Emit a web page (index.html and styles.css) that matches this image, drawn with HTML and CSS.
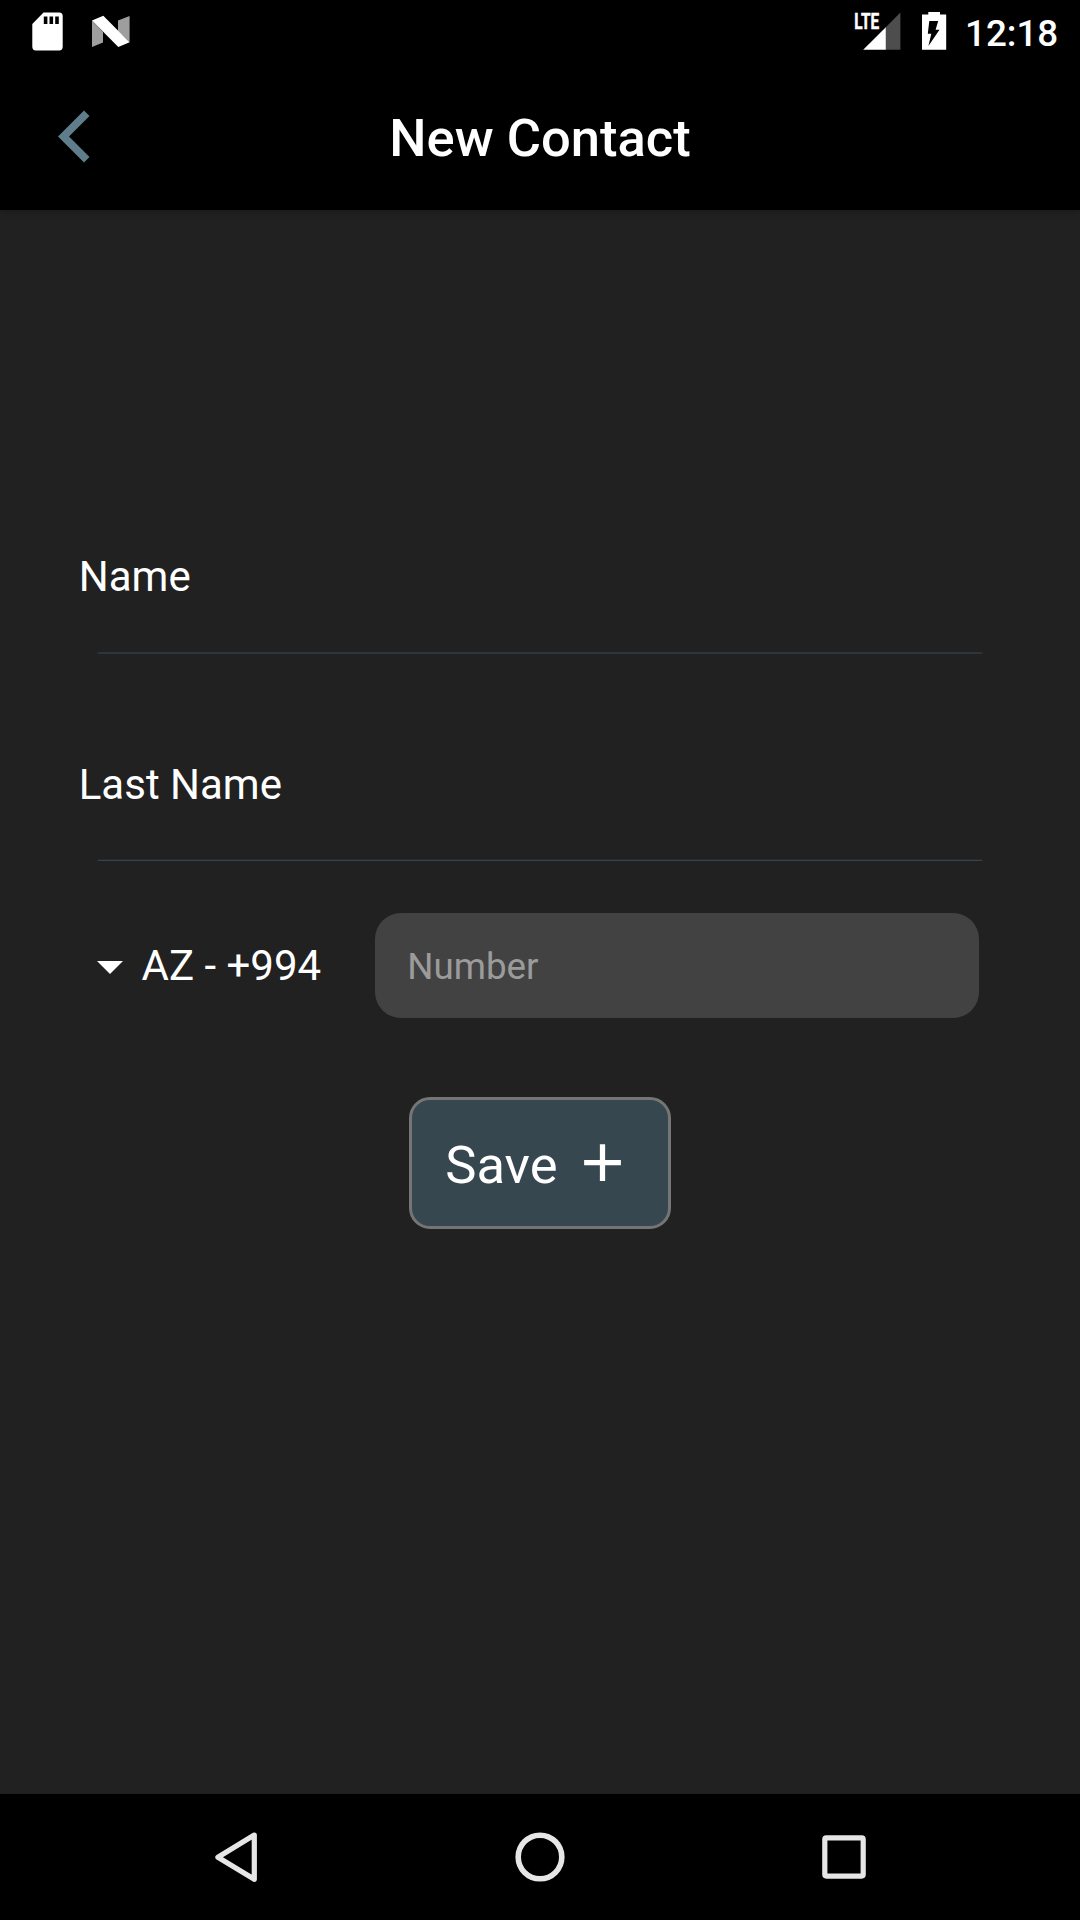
FILE: index.html
```html
<!DOCTYPE html>
<html lang="en">
<head>
<meta charset="utf-8">
<title>New Contact</title>
<link rel="stylesheet" href="styles.css">
</head>
<body>
<div class="screen">
  <div class="statusbar">
    <svg class="notifications" width="140" height="63" viewBox="0 0 140 63">
      <path fill="#fff" fill-rule="evenodd" d="M43.500 12.600H59.200Q62.700 12.600 62.700 16.200V46.800Q62.700 50.400 59.200 50.400H35.800Q32.300 50.400 32.300 46.800V24ZM43.800 16.500V24H47.400V16.500ZM49.500 16.500V24H53.100V16.500ZM55.200 16.500V24H58.800V16.500Z"/>
      <path fill="#9e9e9e" d="M92 20.500L103 32V42.500L92 47ZM118 20.500L129.600 16V42L118 31Z"/>
      <path fill="#fff" d="M92 20.500L103.300 15.800L129.600 42.300L118.300 47Z"/>
    </svg>
    <div class="system">
      <svg width="100" height="63" viewBox="850 0 100 63">
        <path fill="#4d4d4d" d="M885.800 27.200L900.400 12.600V49.800H885.800Z"/>
        <path fill="#fff" d="M863.200 49.800L885.800 27.200V49.800Z"/>
        <text class="lte" x="854.300" y="29" textLength="24.800" lengthAdjust="spacingAndGlyphs">LTE</text>
        <path fill="#fff" d="M922 14.600H928.300V12H940V14.600H946.200V49.800H922Z"/>
        <path fill="#000" d="M929.300 21H938.200L935.600 29.700H939.500L928.400 46L931.300 33.800H927.800Z"/>
      </svg>
      <span class="clock">12:18</span>
    </div>
  </div>
  <header class="appbar">
    <svg class="back" width="36" height="56" viewBox="56 108 36 56">
      <path fill="#607d8b" d="M84 110.400L89.500 115.900L69 136.500L89.500 157.100L84 162.600L58 136.500Z"/>
    </svg>
    <h1 class="title">New Contact</h1>
  </header>
  <main class="form">
    <div class="field">
      <label class="label">Name</label>
      <div class="underline"></div>
    </div>
    <div class="field">
      <label class="label">Last Name</label>
      <div class="underline underline-last"></div>
    </div>
    <div class="phone">
      <div class="country">
        <svg class="caret" width="26" height="13" viewBox="0 0 26 13"><path fill="#fff" d="M0 0H26L13 13Z"/></svg>
        <span class="code">AZ - +994</span>
      </div>
      <div class="number">Number</div>
    </div>
    <div class="save">
      <span class="save-text">Save</span>
      <svg width="63" height="63" viewBox="0 0 24 24"><path fill="#fff" d="M19 13h-6v6h-2v-6H5v-2h6V5h2v6h6v2z"/></svg>
    </div>
  </main>
  <nav class="navbar">
    <svg width="1080" height="126" viewBox="0 1794 1080 126" fill="none" stroke="#e6e6e6">
      <path stroke-width="5.200" stroke-linejoin="round" d="M254.300 1835L217.900 1857.300L254.300 1879.300Z"/>
      <circle stroke-width="5.600" cx="540" cy="1857" r="21.800"/>
      <rect stroke-width="5.200" x="824.800" y="1837.900" width="38.400" height="38.200" rx="1.500"/>
    </svg>
  </nav>
</div>
</body>
</html>
```
FILE: styles.css
```css
* { box-sizing: border-box; }

body {
  margin: 0;
  background: #212121;
  color: #fff;
  font-family: Roboto, sans-serif;
}

svg { display: block; flex: none; }

.screen {
  width: 1080px;
  height: 1920px;
  display: flex;
  flex-direction: column;
}

.statusbar {
  height: 63px;
  display: flex;
  justify-content: space-between;
  background: #000;
}

.system { display: flex; width: 230px; }

.lte {
  font-size: 21.5px;
  font-weight: 700;
  fill: #fff;
  stroke: #fff;
  stroke-width: 0.5px;
}

.clock {
  margin: 12px 0 0 15px;
  font-size: 36.75px;
  line-height: 44px;
  font-weight: 500;
  white-space: nowrap;
}

.appbar {
  height: 147px;
  display: grid;
  grid-template-columns: 56px 1fr 56px;
  background: #000;
  box-shadow: 0 2px 6px rgba(0, 0, 0, 0.25);
}

.back { margin: 45px 0 0 56px; }

.title {
  margin: 44px 0 0;
  font-size: 52.5px;
  line-height: 62px;
  font-weight: 500;
  text-align: center;
  white-space: nowrap;
}

.form {
  flex: 1;
  padding-top: 342px;
  display: flex;
  flex-direction: column;
}

.field {
  padding: 0 97px 0 78.75px;
  display: flex;
  flex-direction: column;
}

.field + .field { margin-top: 106px; }

.label {
  font-size: 42px;
  line-height: 50px;
}

.underline {
  height: 2px;
  margin: 50px 0 0 18.25px;
  border-radius: 6px / 2px;
  background: #2c373c;
}

.underline-last {
  margin-top: 49px;
  background: linear-gradient(#272b2e 50%, #35454d 50%);
}

.phone {
  margin: 52.3px 101px 0 97px;
  display: flex;
  justify-content: space-between;
  align-items: center;
}

.country {
  display: flex;
  align-items: center;
  gap: 18.5px;
}

.caret { margin-top: 4px; }

.code {
  font-size: 42px;
  line-height: 50px;
  white-space: nowrap;
}

.number {
  width: 603.75px;
  height: 105px;
  padding: 1px 32px 0;
  border-radius: 26px;
  background: #424242;
  color: #9b9b9b;
  font-size: 36.75px;
  line-height: 105px;
}

.save {
  align-self: center;
  width: 262.5px;
  height: 131.25px;
  margin-top: 79px;
  padding-left: 33.5px;
  display: flex;
  align-items: center;
  border: 3px solid #757575;
  border-radius: 21px;
  background: #37474f;
}

.save svg { margin-left: 13px; }

.save-text {
  margin-top: 4px;
  font-size: 52.5px;
  line-height: 62px;
}

.navbar { height: 126px; background: #000; }
```
